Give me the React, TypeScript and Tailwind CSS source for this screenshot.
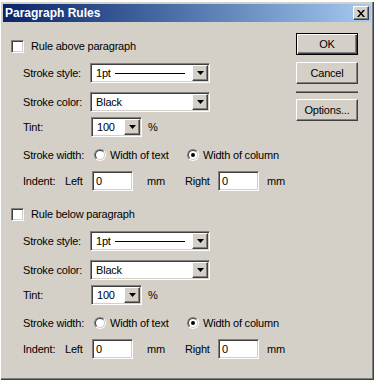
import React from "react";

const FONT = '"Liberation Sans", Arial, Helvetica, sans-serif';

const sunken =
  "border border-t-[#808080] border-l-[#808080] border-r-white border-b-white shadow-[inset_1px_1px_0_#404040,inset_-1px_-1px_0_#d4d0c8]";
const raised =
  "border border-t-white border-l-white border-r-[#404040] border-b-[#404040] shadow-[inset_-1px_-1px_0_#808080]";

function Arrow() {
  return (
    <svg width="7" height="4" viewBox="0 0 7 4">
      <polygon points="0,0 7,0 3.5,4" fill="#000" />
    </svg>
  );
}

function DropBtn() {
  return (
    <div className={`w-[16px] h-full bg-[#d4d0c8] flex items-center justify-center ${raised}`}>
      <Arrow />
    </div>
  );
}

function Combo({ width, children }: { width: number; children: React.ReactNode }) {
  return (
    <div className={`h-[20px] bg-white flex p-[1px] ${sunken}`} style={{ width }}>
      <div className="flex-1 flex items-center pl-[4px] overflow-hidden">{children}</div>
      <DropBtn />
    </div>
  );
}

function CheckBox() {
  return <div className={`w-[13px] h-[13px] bg-white shrink-0 ${sunken}`} />;
}

function Radio({ checked }: { checked?: boolean }) {
  return (
    <div className="w-[12px] h-[12px] rounded-full border border-t-[#808080] border-l-[#808080] border-r-white border-b-white shrink-0">
      <div className="w-full h-full rounded-full border border-t-[#404040] border-l-[#404040] border-r-[#d4d0c8] border-b-[#d4d0c8] bg-white flex items-center justify-center">
        {checked && <div className="w-[4px] h-[4px] rounded-full bg-black" />}
      </div>
    </div>
  );
}

function TextBox({ value }: { value: string }) {
  return (
    <div className={`w-[41px] h-[20px] bg-white flex items-center pl-[3px] ${sunken}`}>{value}</div>
  );
}

function Section({ title }: { title: string }) {
  return (
    <div className="flex flex-col">
      <div className="h-[18px] flex items-center pl-[8px]">
        <CheckBox />
        <span className="ml-[7px]">{title}</span>
      </div>
      <div className="h-[20px] mt-[8px] flex items-center pl-[20px]">
        <span className="w-[67px]">Stroke style:</span>
        <Combo width={120}>
          <span>1pt</span>
          <span className="ml-[4px] h-[1px] w-[70px] bg-black" />
        </Combo>
      </div>
      <div className="h-[20px] mt-[9px] flex items-center pl-[20px]">
        <span className="w-[67px]">Stroke color:</span>
        <Combo width={120}>
          <span>Black</span>
        </Combo>
      </div>
      <div className="h-[20px] mt-[5px] flex items-center pl-[20px]">
        <span className="w-[68px]">Tint:</span>
        <Combo width={51}>
          <span>100</span>
        </Combo>
        <span className="ml-[6px]">%</span>
      </div>
      <div className="h-[20px] mt-[8px] flex items-center pl-[20px]">
        <span className="w-[71px]">Stroke width:</span>
        <div className="w-[93px] flex items-center">
          <Radio />
          <span className="ml-[4px]">Width of text</span>
        </div>
        <Radio checked />
        <span className="ml-[4px]">Width of column</span>
      </div>
      <div className="h-[20px] mt-[6px] flex items-center pl-[20px]">
        <span className="w-[42px]">Indent:</span>
        <span className="w-[27px]">Left</span>
        <TextBox value="0" />
        <span className="ml-[14px] w-[38px]">mm</span>
        <span className="w-[33px]">Right</span>
        <TextBox value="0" />
        <span className="ml-[8px]">mm</span>
      </div>
    </div>
  );
}

function Button({ label, isDefault }: { label: string; isDefault?: boolean }) {
  const cls = isDefault
    ? "border border-black shadow-[inset_1px_1px_0_#fff,inset_-1px_-1px_0_#404040,inset_-2px_-2px_0_#808080]"
    : raised;
  return (
    <div className={`h-[22px] w-[62px] bg-[#d4d0c8] flex items-center justify-center ${cls}`}>
      {label}
    </div>
  );
}

export default function App() {
  return (
    <div className="w-[374px] h-[380px] bg-white pt-[1px] overflow-hidden" style={{ fontFamily: FONT }}>
      <div className="w-[374px] h-[379px] bg-[#d4d0c8] p-[3px] flex flex-col shadow-[inset_1px_1px_0_#fff,inset_-1px_-1px_0_#404040,inset_-2px_-2px_0_#808080] text-[11px] tracking-[-0.2px] text-black">
        <div className="h-[18px] flex items-center justify-between bg-gradient-to-r from-[#0a246a] to-[#a6caf0]">
          <span className="pl-[2px] text-white font-bold text-[12px] tracking-normal">Paragraph Rules</span>
          <div className={`w-[16px] h-[14px] mr-[2px] bg-[#d4d0c8] flex items-center justify-center ${raised}`}>
            <svg width="8" height="7" viewBox="0 0 8 7">
              <path d="M0 0h2l2 2.5L6 0h2L5 3.5 8 7H6L4 4.5 2 7H0l3-3.5z" fill="#000" />
            </svg>
          </div>
        </div>
        <div className="flex-1 flex">
          <div className="flex-1 flex flex-col pt-[15px]">
            <Section title="Rule above paragraph" />
            <div className="mt-[14px]">
              <Section title="Rule below paragraph" />
            </div>
          </div>
          <div className="w-[62px] mr-[13px] mt-[11px] flex flex-col">
            <Button label="OK" isDefault />
            <div className="mt-[7px]">
              <Button label="Cancel" />
            </div>
            <div className="mt-[7px] h-[2px] bg-[#808080] border-b border-[#404040]" />
            <div className="mt-[6px]">
              <Button label="Options..." />
            </div>
          </div>
        </div>
      </div>
    </div>
  );
}
